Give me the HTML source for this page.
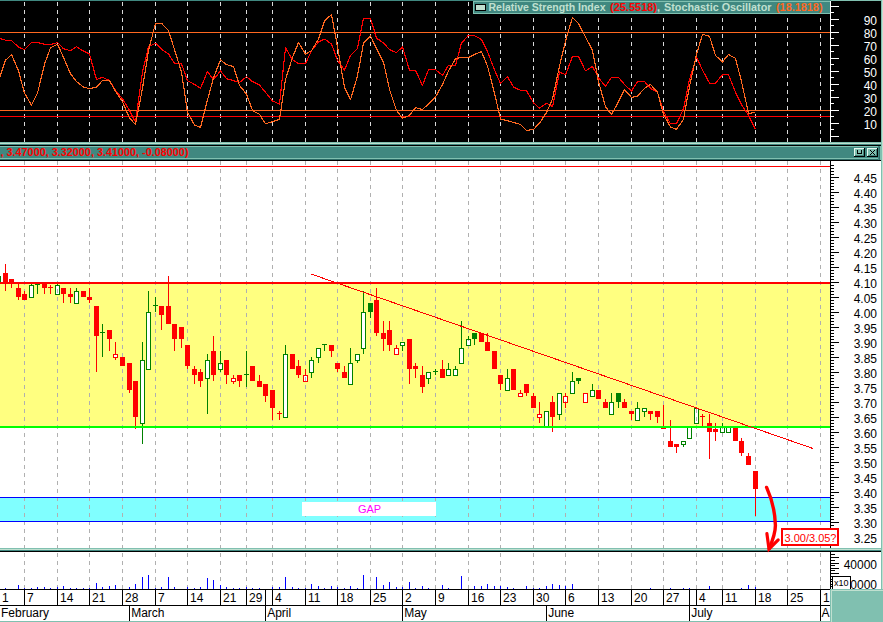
<!DOCTYPE html>
<html><head><meta charset="utf-8"><title>Chart</title>
<style>
html,body{margin:0;padding:0;background:#fff;}
svg{display:block;font-family:"Liberation Sans",sans-serif;}
</style></head>
<body>
<svg width="883" height="622" viewBox="0 0 883 622" shape-rendering="crispEdges">
<rect x="0" y="0" width="883" height="622" fill="#ffffff"/>
<rect x="0" y="0" width="883" height="1" fill="#408880"/>
<rect x="831" y="0" width="52" height="1" fill="#80c0b0"/>
<rect x="0" y="1" width="881" height="141" fill="#000000"/>
<rect x="881" y="0" width="1" height="622" fill="#80c0b0"/>
<rect x="882" y="0" width="1" height="622" fill="#c0e0d0"/>
<rect x="0" y="142" width="881" height="1" fill="#80c0b0"/>
<rect x="0" y="143" width="881" height="1" fill="#c0e0d0"/>
<rect x="0" y="144" width="881" height="1" fill="#408880"/>
<rect x="0" y="145" width="881" height="1" fill="#000"/>
<rect x="0" y="146" width="881" height="1" fill="#80c0b0"/>
<rect x="0" y="147" width="881" height="11" fill="#408880"/>
<rect x="0" y="158" width="881" height="1" fill="#80c0b0"/>
<rect x="0" y="159" width="881" height="1" fill="#2c6c66"/>
<rect x="0" y="160" width="881" height="1" fill="#000"/>
<rect x="878" y="146" width="3" height="14" fill="#408880"/>
<rect x="880" y="146" width="1" height="14" fill="#80c0b0"/>
<rect x="879" y="147" width="1" height="13" fill="#2c6c66"/>
<line x1="24.5" y1="2" x2="24.5" y2="142" stroke="#d8d8d8" stroke-width="1" stroke-dasharray="4 4"/>
<line x1="57.5" y1="2" x2="57.5" y2="142" stroke="#d8d8d8" stroke-width="1" stroke-dasharray="4 4"/>
<line x1="89.5" y1="2" x2="89.5" y2="142" stroke="#d8d8d8" stroke-width="1" stroke-dasharray="4 4"/>
<line x1="122.5" y1="2" x2="122.5" y2="142" stroke="#d8d8d8" stroke-width="1" stroke-dasharray="4 4"/>
<line x1="155.5" y1="2" x2="155.5" y2="142" stroke="#d8d8d8" stroke-width="1" stroke-dasharray="4 4"/>
<line x1="187.5" y1="2" x2="187.5" y2="142" stroke="#d8d8d8" stroke-width="1" stroke-dasharray="4 4"/>
<line x1="220.5" y1="2" x2="220.5" y2="142" stroke="#d8d8d8" stroke-width="1" stroke-dasharray="4 4"/>
<line x1="246.5" y1="2" x2="246.5" y2="142" stroke="#d8d8d8" stroke-width="1" stroke-dasharray="4 4"/>
<line x1="272.5" y1="2" x2="272.5" y2="142" stroke="#d8d8d8" stroke-width="1" stroke-dasharray="4 4"/>
<line x1="305.5" y1="2" x2="305.5" y2="142" stroke="#d8d8d8" stroke-width="1" stroke-dasharray="4 4"/>
<line x1="337.5" y1="2" x2="337.5" y2="142" stroke="#d8d8d8" stroke-width="1" stroke-dasharray="4 4"/>
<line x1="370.5" y1="2" x2="370.5" y2="142" stroke="#d8d8d8" stroke-width="1" stroke-dasharray="4 4"/>
<line x1="402.5" y1="2" x2="402.5" y2="142" stroke="#d8d8d8" stroke-width="1" stroke-dasharray="4 4"/>
<line x1="435.5" y1="2" x2="435.5" y2="142" stroke="#d8d8d8" stroke-width="1" stroke-dasharray="4 4"/>
<line x1="468.5" y1="2" x2="468.5" y2="142" stroke="#d8d8d8" stroke-width="1" stroke-dasharray="4 4"/>
<line x1="500.5" y1="2" x2="500.5" y2="142" stroke="#d8d8d8" stroke-width="1" stroke-dasharray="4 4"/>
<line x1="533.5" y1="2" x2="533.5" y2="142" stroke="#d8d8d8" stroke-width="1" stroke-dasharray="4 4"/>
<line x1="565.5" y1="2" x2="565.5" y2="142" stroke="#d8d8d8" stroke-width="1" stroke-dasharray="4 4"/>
<line x1="598.5" y1="2" x2="598.5" y2="142" stroke="#d8d8d8" stroke-width="1" stroke-dasharray="4 4"/>
<line x1="631.5" y1="2" x2="631.5" y2="142" stroke="#d8d8d8" stroke-width="1" stroke-dasharray="4 4"/>
<line x1="663.5" y1="2" x2="663.5" y2="142" stroke="#d8d8d8" stroke-width="1" stroke-dasharray="4 4"/>
<line x1="696.5" y1="2" x2="696.5" y2="142" stroke="#d8d8d8" stroke-width="1" stroke-dasharray="4 4"/>
<line x1="722.5" y1="2" x2="722.5" y2="142" stroke="#d8d8d8" stroke-width="1" stroke-dasharray="4 4"/>
<line x1="755.5" y1="2" x2="755.5" y2="142" stroke="#d8d8d8" stroke-width="1" stroke-dasharray="4 4"/>
<line x1="787.5" y1="2" x2="787.5" y2="142" stroke="#d8d8d8" stroke-width="1" stroke-dasharray="4 4"/>
<line x1="820.5" y1="2" x2="820.5" y2="142" stroke="#d8d8d8" stroke-width="1" stroke-dasharray="4 4"/>
<rect x="0" y="32" width="830" height="1" fill="#ff6820"/>
<rect x="0" y="110" width="830" height="1" fill="#ff6820"/>
<rect x="0" y="116" width="830" height="1" fill="#ff0000"/>
<polyline points="-1.5,38.1 5.5,40.1 11.5,40.4 18.5,47.2 24.5,49.7 31.5,42.6 37.5,42.6 44.5,44.3 50.5,44.5 57.5,42.6 63.5,48.7 70.5,50.7 76.5,46.8 83.5,51.1 89.5,54.0 96.5,79.6 102.5,77.3 109.5,80.6 115.5,90.3 122.5,98.9 129.5,110.5 135.5,122.1 142.5,71.9 148.5,46.8 155.5,43.3 161.5,49.3 168.5,54.0 174.5,63.2 181.5,63.8 187.5,80.6 194.5,84.5 200.5,88.3 207.5,71.5 213.5,79.6 220.5,70.9 226.5,78.7 233.5,80.6 239.5,82.5 246.5,76.7 252.5,81.6 259.5,85.0 265.5,92.2 272.5,100.9 279.5,104.2 285.5,47.8 292.5,59.8 298.5,63.6 305.5,63.6 311.5,50.7 318.5,42.0 324.5,39.1 331.5,43.9 337.5,60.3 344.5,70.0 350.5,55.5 357.5,48.4 363.5,18.2 370.5,18.2 376.5,38.1 383.5,43.0 389.5,49.7 396.5,52.6 402.5,46.8 409.5,70.4 415.5,70.4 422.5,85.4 428.5,69.6 435.5,69.6 442.5,75.4 448.5,65.2 455.5,65.2 461.5,43.0 468.5,35.2 474.5,35.6 481.5,39.5 487.5,51.6 494.5,70.0 500.5,83.5 507.5,76.7 513.5,87.0 520.5,90.3 526.5,90.6 533.5,102.8 539.5,108.2 546.5,103.2 552.5,106.7 559.5,71.9 565.5,74.8 572.5,56.5 578.5,56.5 585.5,70.9 592.5,66.5 598.5,77.7 605.5,86.4 611.5,77.3 618.5,77.3 624.5,84.5 631.5,91.2 637.5,81.6 644.5,81.6 650.5,88.3 657.5,92.2 663.5,111.5 670.5,123.7 676.5,123.7 683.5,108.6 689.5,79.6 696.5,57.4 702.5,70.0 709.5,83.1 715.5,83.1 722.5,74.8 728.5,74.8 735.5,92.2 741.5,104.7 748.5,115.4 755.5,129.4" fill="none" stroke="#ff0000" stroke-width="1.15" stroke-linejoin="round"/>
<polyline points="-1.5,80.6 5.5,60.3 11.5,54.5 18.5,70.9 24.5,93.2 31.5,105.1 37.5,93.2 44.5,64.2 50.5,47.8 57.5,44.3 63.5,57.4 70.5,73.8 76.5,81.6 83.5,87.0 89.5,88.7 96.5,87.0 102.5,80.6 109.5,80.6 115.5,91.2 122.5,101.8 129.5,118.2 135.5,124.4 142.5,88.3 148.5,50.7 155.5,23.3 161.5,23.3 168.5,30.4 174.5,49.7 181.5,71.9 187.5,112.5 194.5,125.0 200.5,127.5 207.5,99.9 213.5,77.7 220.5,59.9 226.5,64.6 233.5,66.5 239.5,85.4 246.5,94.1 252.5,110.5 259.5,114.4 265.5,123.7 272.5,121.7 279.5,119.2 285.5,79.6 292.5,57.4 298.5,42.6 305.5,54.0 311.5,50.7 318.5,39.1 324.5,20.8 331.5,14.6 337.5,46.8 344.5,87.4 350.5,99.9 357.5,75.8 363.5,43.0 370.5,35.8 376.5,48.7 383.5,62.3 389.5,89.3 396.5,110.5 402.5,118.2 409.5,115.4 415.5,107.6 422.5,109.6 428.5,103.8 435.5,97.0 442.5,84.5 448.5,70.9 455.5,58.8 461.5,57.4 468.5,57.4 474.5,54.5 481.5,51.6 487.5,66.1 494.5,93.2 500.5,119.2 507.5,120.6 513.5,122.5 520.5,124.4 526.5,130.4 533.5,129.4 539.5,123.1 546.5,112.5 552.5,98.9 559.5,66.1 565.5,41.0 572.5,17.3 578.5,23.7 585.5,36.8 592.5,50.7 598.5,81.6 605.5,106.7 611.5,114.4 618.5,101.8 624.5,89.7 631.5,97.4 637.5,96.0 644.5,88.3 650.5,84.5 657.5,92.2 663.5,114.4 670.5,126.9 676.5,129.4 683.5,119.2 689.5,86.4 696.5,54.5 702.5,34.3 709.5,36.2 715.5,55.5 722.5,61.9 728.5,54.5 735.5,58.4 741.5,81.6 748.5,113.4 755.5,112.5" fill="none" stroke="#ff6820" stroke-width="1.15" stroke-linejoin="round"/>
<rect x="830" y="1" width="1" height="141" fill="#ffffff"/>
<rect x="831" y="6" width="8" height="1" fill="#fff"/>
<rect x="831" y="12" width="3" height="1" fill="#fff"/>
<rect x="831" y="19" width="8" height="1" fill="#fff"/>
<rect x="831" y="25" width="3" height="1" fill="#fff"/>
<rect x="831" y="32" width="8" height="1" fill="#fff"/>
<rect x="831" y="38" width="3" height="1" fill="#fff"/>
<rect x="831" y="45" width="8" height="1" fill="#fff"/>
<rect x="831" y="51" width="3" height="1" fill="#fff"/>
<rect x="831" y="58" width="8" height="1" fill="#fff"/>
<rect x="831" y="64" width="3" height="1" fill="#fff"/>
<rect x="831" y="71" width="8" height="1" fill="#fff"/>
<rect x="831" y="77" width="3" height="1" fill="#fff"/>
<rect x="831" y="84" width="8" height="1" fill="#fff"/>
<rect x="831" y="90" width="3" height="1" fill="#fff"/>
<rect x="831" y="97" width="8" height="1" fill="#fff"/>
<rect x="831" y="103" width="3" height="1" fill="#fff"/>
<rect x="831" y="110" width="8" height="1" fill="#fff"/>
<rect x="831" y="116" width="3" height="1" fill="#fff"/>
<rect x="831" y="123" width="8" height="1" fill="#fff"/>
<rect x="831" y="129" width="3" height="1" fill="#fff"/>
<rect x="831" y="136" width="8" height="1" fill="#fff"/>
<text x="877" y="25" font-size="12" fill="#fff" text-anchor="end" font-weight="normal">90</text>
<text x="877" y="38" font-size="12" fill="#fff" text-anchor="end" font-weight="normal">80</text>
<text x="877" y="51" font-size="12" fill="#fff" text-anchor="end" font-weight="normal">70</text>
<text x="877" y="64" font-size="12" fill="#fff" text-anchor="end" font-weight="normal">60</text>
<text x="877" y="77" font-size="12" fill="#fff" text-anchor="end" font-weight="normal">50</text>
<text x="877" y="90" font-size="12" fill="#fff" text-anchor="end" font-weight="normal">40</text>
<text x="877" y="103" font-size="12" fill="#fff" text-anchor="end" font-weight="normal">30</text>
<text x="877" y="116" font-size="12" fill="#fff" text-anchor="end" font-weight="normal">20</text>
<text x="877" y="129" font-size="12" fill="#fff" text-anchor="end" font-weight="normal">10</text>
<rect x="473" y="1" width="358" height="13" fill="#408880"/>
<rect x="473" y="1" width="358" height="1" fill="#80c0b0"/>
<rect x="473" y="13" width="358" height="1" fill="#80c0b0"/>
<rect x="473" y="1" width="1" height="13" fill="#80c0b0"/>
<rect x="830" y="1" width="1" height="13" fill="#fff"/>
<rect x="475" y="4" width="11" height="7" fill="#000"/>
<rect x="476" y="5" width="9" height="5" fill="#c0e0d0"/>
<text x="488.5" y="10.5" font-size="10.5" font-weight="bold" fill="#c0e0d0" textLength="117" lengthAdjust="spacingAndGlyphs">Relative Strength Index</text>
<text x="610" y="10.5" font-size="10.5" font-weight="bold" fill="#ff0000" textLength="47" lengthAdjust="spacingAndGlyphs">(25.5518)</text>
<text x="657" y="10.5" font-size="10.5" font-weight="bold" fill="#c0e0d0" textLength="3" lengthAdjust="spacingAndGlyphs">,</text>
<text x="664" y="10.5" font-size="10.5" font-weight="bold" fill="#c0e0d0" textLength="107.5" lengthAdjust="spacingAndGlyphs">Stochastic Oscillator</text>
<text x="776" y="10.5" font-size="10.5" font-weight="bold" fill="#ff6820" textLength="46.5" lengthAdjust="spacingAndGlyphs">(18.1818)</text>
<text x="0.5" y="156" font-size="10.2" font-weight="bold" fill="#ff0000" textLength="188" lengthAdjust="spacingAndGlyphs">, 3.47000, 3.32000, 3.41000, -0.08000)</text>
<rect x="854" y="148" width="11" height="9" fill="#000"/>
<rect x="854" y="148" width="10" height="8" fill="#e8f8f0"/>
<rect x="855" y="149" width="9" height="7" fill="#408078"/>
<rect x="855" y="149" width="8" height="6" fill="#80c0b0"/>
<rect x="867" y="148" width="11" height="9" fill="#000"/>
<rect x="867" y="148" width="10" height="8" fill="#e8f8f0"/>
<rect x="868" y="149" width="9" height="7" fill="#408078"/>
<rect x="868" y="149" width="8" height="6" fill="#80c0b0"/>
<rect x="857" y="150" width="1" height="4" fill="#000"/>
<rect x="861" y="150" width="1" height="4" fill="#000"/>
<rect x="857" y="153" width="5" height="1" fill="#000"/>
<rect x="870" y="150" width="1" height="1" fill="#000"/>
<rect x="874" y="150" width="1" height="1" fill="#000"/>
<rect x="871" y="151" width="1" height="1" fill="#000"/>
<rect x="873" y="151" width="1" height="1" fill="#000"/>
<rect x="872" y="152" width="1" height="1" fill="#000"/>
<rect x="872" y="152" width="1" height="1" fill="#000"/>
<rect x="873" y="153" width="1" height="1" fill="#000"/>
<rect x="871" y="153" width="1" height="1" fill="#000"/>
<rect x="874" y="154" width="1" height="1" fill="#000"/>
<rect x="870" y="154" width="1" height="1" fill="#000"/>
<rect x="0" y="284" width="830" height="142" fill="#ffff80"/>
<rect x="0" y="498" width="830" height="23" fill="#80ffff"/>
<line x1="24.5" y1="161" x2="24.5" y2="548" stroke="#b0b0b0" stroke-width="1" stroke-dasharray="4 4"/>
<line x1="24.5" y1="553" x2="24.5" y2="589" stroke="#b0b0b0" stroke-width="1" stroke-dasharray="4 4"/>
<line x1="57.5" y1="161" x2="57.5" y2="548" stroke="#b0b0b0" stroke-width="1" stroke-dasharray="4 4"/>
<line x1="57.5" y1="553" x2="57.5" y2="589" stroke="#b0b0b0" stroke-width="1" stroke-dasharray="4 4"/>
<line x1="89.5" y1="161" x2="89.5" y2="548" stroke="#b0b0b0" stroke-width="1" stroke-dasharray="4 4"/>
<line x1="89.5" y1="553" x2="89.5" y2="589" stroke="#b0b0b0" stroke-width="1" stroke-dasharray="4 4"/>
<line x1="122.5" y1="161" x2="122.5" y2="548" stroke="#b0b0b0" stroke-width="1" stroke-dasharray="4 4"/>
<line x1="122.5" y1="553" x2="122.5" y2="589" stroke="#b0b0b0" stroke-width="1" stroke-dasharray="4 4"/>
<line x1="155.5" y1="161" x2="155.5" y2="548" stroke="#b0b0b0" stroke-width="1" stroke-dasharray="4 4"/>
<line x1="155.5" y1="553" x2="155.5" y2="589" stroke="#b0b0b0" stroke-width="1" stroke-dasharray="4 4"/>
<line x1="187.5" y1="161" x2="187.5" y2="548" stroke="#b0b0b0" stroke-width="1" stroke-dasharray="4 4"/>
<line x1="187.5" y1="553" x2="187.5" y2="589" stroke="#b0b0b0" stroke-width="1" stroke-dasharray="4 4"/>
<line x1="220.5" y1="161" x2="220.5" y2="548" stroke="#b0b0b0" stroke-width="1" stroke-dasharray="4 4"/>
<line x1="220.5" y1="553" x2="220.5" y2="589" stroke="#b0b0b0" stroke-width="1" stroke-dasharray="4 4"/>
<line x1="246.5" y1="161" x2="246.5" y2="548" stroke="#b0b0b0" stroke-width="1" stroke-dasharray="4 4"/>
<line x1="246.5" y1="553" x2="246.5" y2="589" stroke="#b0b0b0" stroke-width="1" stroke-dasharray="4 4"/>
<line x1="272.5" y1="161" x2="272.5" y2="548" stroke="#b0b0b0" stroke-width="1" stroke-dasharray="4 4"/>
<line x1="272.5" y1="553" x2="272.5" y2="589" stroke="#b0b0b0" stroke-width="1" stroke-dasharray="4 4"/>
<line x1="305.5" y1="161" x2="305.5" y2="548" stroke="#b0b0b0" stroke-width="1" stroke-dasharray="4 4"/>
<line x1="305.5" y1="553" x2="305.5" y2="589" stroke="#b0b0b0" stroke-width="1" stroke-dasharray="4 4"/>
<line x1="337.5" y1="161" x2="337.5" y2="548" stroke="#b0b0b0" stroke-width="1" stroke-dasharray="4 4"/>
<line x1="337.5" y1="553" x2="337.5" y2="589" stroke="#b0b0b0" stroke-width="1" stroke-dasharray="4 4"/>
<line x1="370.5" y1="161" x2="370.5" y2="548" stroke="#b0b0b0" stroke-width="1" stroke-dasharray="4 4"/>
<line x1="370.5" y1="553" x2="370.5" y2="589" stroke="#b0b0b0" stroke-width="1" stroke-dasharray="4 4"/>
<line x1="402.5" y1="161" x2="402.5" y2="548" stroke="#b0b0b0" stroke-width="1" stroke-dasharray="4 4"/>
<line x1="402.5" y1="553" x2="402.5" y2="589" stroke="#b0b0b0" stroke-width="1" stroke-dasharray="4 4"/>
<line x1="435.5" y1="161" x2="435.5" y2="548" stroke="#b0b0b0" stroke-width="1" stroke-dasharray="4 4"/>
<line x1="435.5" y1="553" x2="435.5" y2="589" stroke="#b0b0b0" stroke-width="1" stroke-dasharray="4 4"/>
<line x1="468.5" y1="161" x2="468.5" y2="548" stroke="#b0b0b0" stroke-width="1" stroke-dasharray="4 4"/>
<line x1="468.5" y1="553" x2="468.5" y2="589" stroke="#b0b0b0" stroke-width="1" stroke-dasharray="4 4"/>
<line x1="500.5" y1="161" x2="500.5" y2="548" stroke="#b0b0b0" stroke-width="1" stroke-dasharray="4 4"/>
<line x1="500.5" y1="553" x2="500.5" y2="589" stroke="#b0b0b0" stroke-width="1" stroke-dasharray="4 4"/>
<line x1="533.5" y1="161" x2="533.5" y2="548" stroke="#b0b0b0" stroke-width="1" stroke-dasharray="4 4"/>
<line x1="533.5" y1="553" x2="533.5" y2="589" stroke="#b0b0b0" stroke-width="1" stroke-dasharray="4 4"/>
<line x1="565.5" y1="161" x2="565.5" y2="548" stroke="#b0b0b0" stroke-width="1" stroke-dasharray="4 4"/>
<line x1="565.5" y1="553" x2="565.5" y2="589" stroke="#b0b0b0" stroke-width="1" stroke-dasharray="4 4"/>
<line x1="598.5" y1="161" x2="598.5" y2="548" stroke="#b0b0b0" stroke-width="1" stroke-dasharray="4 4"/>
<line x1="598.5" y1="553" x2="598.5" y2="589" stroke="#b0b0b0" stroke-width="1" stroke-dasharray="4 4"/>
<line x1="631.5" y1="161" x2="631.5" y2="548" stroke="#b0b0b0" stroke-width="1" stroke-dasharray="4 4"/>
<line x1="631.5" y1="553" x2="631.5" y2="589" stroke="#b0b0b0" stroke-width="1" stroke-dasharray="4 4"/>
<line x1="663.5" y1="161" x2="663.5" y2="548" stroke="#b0b0b0" stroke-width="1" stroke-dasharray="4 4"/>
<line x1="663.5" y1="553" x2="663.5" y2="589" stroke="#b0b0b0" stroke-width="1" stroke-dasharray="4 4"/>
<line x1="696.5" y1="161" x2="696.5" y2="548" stroke="#b0b0b0" stroke-width="1" stroke-dasharray="4 4"/>
<line x1="696.5" y1="553" x2="696.5" y2="589" stroke="#b0b0b0" stroke-width="1" stroke-dasharray="4 4"/>
<line x1="722.5" y1="161" x2="722.5" y2="548" stroke="#b0b0b0" stroke-width="1" stroke-dasharray="4 4"/>
<line x1="722.5" y1="553" x2="722.5" y2="589" stroke="#b0b0b0" stroke-width="1" stroke-dasharray="4 4"/>
<line x1="755.5" y1="161" x2="755.5" y2="548" stroke="#b0b0b0" stroke-width="1" stroke-dasharray="4 4"/>
<line x1="755.5" y1="553" x2="755.5" y2="589" stroke="#b0b0b0" stroke-width="1" stroke-dasharray="4 4"/>
<line x1="787.5" y1="161" x2="787.5" y2="548" stroke="#b0b0b0" stroke-width="1" stroke-dasharray="4 4"/>
<line x1="787.5" y1="553" x2="787.5" y2="589" stroke="#b0b0b0" stroke-width="1" stroke-dasharray="4 4"/>
<line x1="820.5" y1="161" x2="820.5" y2="548" stroke="#b0b0b0" stroke-width="1" stroke-dasharray="4 4"/>
<line x1="820.5" y1="553" x2="820.5" y2="589" stroke="#b0b0b0" stroke-width="1" stroke-dasharray="4 4"/>
<rect x="0" y="166" width="830" height="1" fill="#ff0000"/>
<rect x="0" y="497" width="830" height="1" fill="#0000ff"/>
<rect x="0" y="521" width="830" height="1" fill="#0000ff"/>
<rect x="302" y="502" width="134" height="14" fill="#fff"/>
<text x="369.5" y="513" font-size="11" fill="#ff00ff" text-anchor="middle" font-weight="normal">GAP</text>
<rect x="-2" y="276" width="1" height="6" fill="#008000"/>
<rect x="-4" y="276" width="5" height="7" fill="#008000"/>
<rect x="-3" y="277" width="3" height="5" fill="#fff"/>
<rect x="5" y="264" width="1" height="27" fill="#ff0000"/>
<rect x="3" y="273" width="5" height="9" fill="#ff0000"/>
<rect x="11" y="279" width="1" height="9" fill="#ff0000"/>
<rect x="9" y="279" width="5" height="3" fill="#ff0000"/>
<rect x="18" y="284" width="1" height="16" fill="#ff0000"/>
<rect x="16" y="288" width="5" height="9" fill="#ff0000"/>
<rect x="24" y="291" width="1" height="9" fill="#ff0000"/>
<rect x="22" y="294" width="5" height="6" fill="#ff0000"/>
<rect x="31" y="284" width="1" height="13" fill="#008000"/>
<rect x="29" y="285" width="5" height="13" fill="#008000"/>
<rect x="30" y="286" width="3" height="11" fill="#fff"/>
<rect x="37" y="285" width="1" height="9" fill="#008000"/>
<rect x="37" y="284" width="1" height="1" fill="#008000"/>
<rect x="35" y="284" width="5" height="1" fill="#008000"/>
<rect x="44" y="284" width="1" height="10" fill="#ff0000"/>
<rect x="42" y="284" width="5" height="4" fill="#ff0000"/>
<rect x="50" y="285" width="1" height="9" fill="#ff0000"/>
<rect x="48" y="287" width="5" height="1" fill="#ff0000"/>
<rect x="57" y="284" width="1" height="10" fill="#008000"/>
<rect x="55" y="285" width="5" height="10" fill="#008000"/>
<rect x="56" y="286" width="3" height="8" fill="#fff"/>
<rect x="57" y="289" width="1" height="1" fill="#b0b0b0"/>
<rect x="57" y="290" width="1" height="1" fill="#b0b0b0"/>
<rect x="57" y="291" width="1" height="1" fill="#b0b0b0"/>
<rect x="57" y="292" width="1" height="1" fill="#b0b0b0"/>
<rect x="63" y="288" width="1" height="15" fill="#ff0000"/>
<rect x="61" y="288" width="5" height="6" fill="#ff0000"/>
<rect x="70" y="288" width="1" height="15" fill="#ff0000"/>
<rect x="68" y="294" width="5" height="3" fill="#ff0000"/>
<rect x="76" y="288" width="1" height="15" fill="#008000"/>
<rect x="74" y="291" width="5" height="13" fill="#008000"/>
<rect x="75" y="292" width="3" height="11" fill="#fff"/>
<rect x="83" y="291" width="1" height="6" fill="#ff0000"/>
<rect x="81" y="291" width="5" height="6" fill="#ff0000"/>
<rect x="89" y="288" width="1" height="15" fill="#ff0000"/>
<rect x="87" y="297" width="5" height="3" fill="#ff0000"/>
<rect x="96" y="306" width="1" height="66" fill="#ff0000"/>
<rect x="94" y="306" width="5" height="30" fill="#ff0000"/>
<rect x="102" y="324" width="1" height="33" fill="#008000"/>
<rect x="100" y="332" width="5" height="1" fill="#008000"/>
<rect x="109" y="330" width="1" height="21" fill="#ff0000"/>
<rect x="107" y="330" width="5" height="9" fill="#ff0000"/>
<rect x="115" y="342" width="1" height="18" fill="#ff0000"/>
<rect x="113" y="354" width="5" height="4" fill="#ff0000"/>
<rect x="114" y="355" width="3" height="2" fill="#fff"/>
<rect x="122" y="357" width="1" height="9" fill="#ff0000"/>
<rect x="120" y="357" width="5" height="9" fill="#ff0000"/>
<rect x="129" y="363" width="1" height="30" fill="#ff0000"/>
<rect x="127" y="363" width="5" height="27" fill="#ff0000"/>
<rect x="135" y="381" width="1" height="48" fill="#ff0000"/>
<rect x="133" y="381" width="5" height="36" fill="#ff0000"/>
<rect x="142" y="342" width="1" height="102" fill="#008000"/>
<rect x="140" y="360" width="5" height="64" fill="#008000"/>
<rect x="141" y="361" width="3" height="62" fill="#fff"/>
<rect x="148" y="291" width="1" height="78" fill="#008000"/>
<rect x="146" y="312" width="5" height="58" fill="#008000"/>
<rect x="147" y="313" width="3" height="56" fill="#fff"/>
<rect x="155" y="297" width="1" height="15" fill="#008000"/>
<rect x="153" y="305" width="5" height="1" fill="#008000"/>
<rect x="161" y="306" width="1" height="24" fill="#ff0000"/>
<rect x="159" y="306" width="5" height="9" fill="#ff0000"/>
<rect x="168" y="276" width="1" height="48" fill="#ff0000"/>
<rect x="166" y="306" width="5" height="18" fill="#ff0000"/>
<rect x="174" y="324" width="1" height="27" fill="#ff0000"/>
<rect x="172" y="324" width="5" height="15" fill="#ff0000"/>
<rect x="181" y="327" width="1" height="21" fill="#ff0000"/>
<rect x="179" y="327" width="5" height="12" fill="#ff0000"/>
<rect x="187" y="345" width="1" height="24" fill="#ff0000"/>
<rect x="185" y="345" width="5" height="21" fill="#ff0000"/>
<rect x="194" y="366" width="1" height="18" fill="#ff0000"/>
<rect x="192" y="369" width="5" height="6" fill="#ff0000"/>
<rect x="200" y="369" width="1" height="18" fill="#ff0000"/>
<rect x="198" y="372" width="5" height="9" fill="#ff0000"/>
<rect x="207" y="354" width="1" height="60" fill="#008000"/>
<rect x="205" y="360" width="5" height="19" fill="#008000"/>
<rect x="206" y="361" width="3" height="17" fill="#fff"/>
<rect x="213" y="336" width="1" height="45" fill="#ff0000"/>
<rect x="211" y="351" width="5" height="24" fill="#ff0000"/>
<rect x="220" y="351" width="1" height="21" fill="#008000"/>
<rect x="218" y="363" width="5" height="7" fill="#008000"/>
<rect x="219" y="364" width="3" height="5" fill="#fff"/>
<rect x="220" y="364" width="1" height="1" fill="#b0b0b0"/>
<rect x="226" y="360" width="1" height="24" fill="#ff0000"/>
<rect x="224" y="360" width="5" height="15" fill="#ff0000"/>
<rect x="233" y="375" width="1" height="9" fill="#ff0000"/>
<rect x="231" y="378" width="5" height="4" fill="#ff0000"/>
<rect x="232" y="379" width="3" height="2" fill="#fff"/>
<rect x="239" y="375" width="1" height="12" fill="#ff0000"/>
<rect x="237" y="375" width="5" height="6" fill="#ff0000"/>
<rect x="246" y="351" width="1" height="36" fill="#008000"/>
<rect x="244" y="374" width="5" height="1" fill="#008000"/>
<rect x="252" y="366" width="1" height="15" fill="#ff0000"/>
<rect x="250" y="366" width="5" height="15" fill="#ff0000"/>
<rect x="259" y="375" width="1" height="12" fill="#ff0000"/>
<rect x="257" y="381" width="5" height="6" fill="#ff0000"/>
<rect x="265" y="384" width="1" height="18" fill="#ff0000"/>
<rect x="263" y="384" width="5" height="12" fill="#ff0000"/>
<rect x="272" y="390" width="1" height="30" fill="#ff0000"/>
<rect x="270" y="390" width="5" height="18" fill="#ff0000"/>
<rect x="279" y="411" width="1" height="9" fill="#ff0000"/>
<rect x="277" y="413" width="5" height="1" fill="#ff0000"/>
<rect x="285" y="345" width="1" height="72" fill="#008000"/>
<rect x="283" y="354" width="5" height="64" fill="#008000"/>
<rect x="284" y="355" width="3" height="62" fill="#fff"/>
<rect x="292" y="354" width="1" height="15" fill="#ff0000"/>
<rect x="290" y="354" width="5" height="15" fill="#ff0000"/>
<rect x="298" y="360" width="1" height="18" fill="#ff0000"/>
<rect x="296" y="366" width="5" height="9" fill="#ff0000"/>
<rect x="305" y="369" width="1" height="12" fill="#ff0000"/>
<rect x="303" y="375" width="5" height="7" fill="#ff0000"/>
<rect x="304" y="376" width="3" height="5" fill="#fff"/>
<rect x="305" y="377" width="1" height="1" fill="#b0b0b0"/>
<rect x="305" y="378" width="1" height="1" fill="#b0b0b0"/>
<rect x="305" y="379" width="1" height="1" fill="#b0b0b0"/>
<rect x="305" y="380" width="1" height="1" fill="#b0b0b0"/>
<rect x="311" y="357" width="1" height="21" fill="#008000"/>
<rect x="309" y="360" width="5" height="13" fill="#008000"/>
<rect x="310" y="361" width="3" height="11" fill="#fff"/>
<rect x="318" y="348" width="1" height="15" fill="#008000"/>
<rect x="316" y="348" width="5" height="10" fill="#008000"/>
<rect x="317" y="349" width="3" height="8" fill="#fff"/>
<rect x="324" y="345" width="1" height="6" fill="#008000"/>
<rect x="324" y="344" width="1" height="1" fill="#008000"/>
<rect x="322" y="344" width="5" height="1" fill="#008000"/>
<rect x="331" y="345" width="1" height="12" fill="#ff0000"/>
<rect x="329" y="345" width="5" height="6" fill="#ff0000"/>
<rect x="337" y="363" width="1" height="9" fill="#ff0000"/>
<rect x="335" y="363" width="5" height="6" fill="#ff0000"/>
<rect x="344" y="366" width="1" height="12" fill="#ff0000"/>
<rect x="342" y="372" width="5" height="6" fill="#ff0000"/>
<rect x="350" y="348" width="1" height="36" fill="#008000"/>
<rect x="348" y="363" width="5" height="22" fill="#008000"/>
<rect x="349" y="364" width="3" height="20" fill="#fff"/>
<rect x="357" y="354" width="1" height="9" fill="#008000"/>
<rect x="355" y="354" width="5" height="7" fill="#008000"/>
<rect x="356" y="355" width="3" height="5" fill="#fff"/>
<rect x="363" y="291" width="1" height="63" fill="#008000"/>
<rect x="361" y="312" width="5" height="37" fill="#008000"/>
<rect x="362" y="313" width="3" height="35" fill="#fff"/>
<rect x="370" y="303" width="1" height="15" fill="#008000"/>
<rect x="368" y="303" width="5" height="9" fill="#008000"/>
<rect x="376" y="288" width="1" height="48" fill="#ff0000"/>
<rect x="374" y="300" width="5" height="33" fill="#ff0000"/>
<rect x="383" y="321" width="1" height="30" fill="#ff0000"/>
<rect x="381" y="333" width="5" height="6" fill="#ff0000"/>
<rect x="389" y="321" width="1" height="30" fill="#ff0000"/>
<rect x="387" y="330" width="5" height="15" fill="#ff0000"/>
<rect x="396" y="345" width="1" height="9" fill="#ff0000"/>
<rect x="394" y="348" width="5" height="7" fill="#ff0000"/>
<rect x="395" y="349" width="3" height="5" fill="#fff"/>
<rect x="402" y="342" width="1" height="9" fill="#008000"/>
<rect x="400" y="342" width="5" height="4" fill="#008000"/>
<rect x="401" y="343" width="3" height="2" fill="#fff"/>
<rect x="409" y="339" width="1" height="45" fill="#ff0000"/>
<rect x="407" y="339" width="5" height="30" fill="#ff0000"/>
<rect x="415" y="363" width="1" height="15" fill="#ff0000"/>
<rect x="413" y="366" width="5" height="3" fill="#ff0000"/>
<rect x="422" y="366" width="1" height="27" fill="#ff0000"/>
<rect x="420" y="375" width="5" height="12" fill="#ff0000"/>
<rect x="428" y="372" width="1" height="12" fill="#008000"/>
<rect x="426" y="372" width="5" height="7" fill="#008000"/>
<rect x="427" y="373" width="3" height="5" fill="#fff"/>
<rect x="435" y="369" width="1" height="6" fill="#008000"/>
<rect x="433" y="371" width="5" height="1" fill="#008000"/>
<rect x="442" y="360" width="1" height="18" fill="#ff0000"/>
<rect x="440" y="369" width="5" height="9" fill="#ff0000"/>
<rect x="448" y="363" width="1" height="12" fill="#008000"/>
<rect x="446" y="369" width="5" height="7" fill="#008000"/>
<rect x="447" y="370" width="3" height="5" fill="#fff"/>
<rect x="455" y="366" width="1" height="9" fill="#008000"/>
<rect x="453" y="369" width="5" height="7" fill="#008000"/>
<rect x="454" y="370" width="3" height="5" fill="#fff"/>
<rect x="461" y="321" width="1" height="42" fill="#008000"/>
<rect x="459" y="348" width="5" height="16" fill="#008000"/>
<rect x="460" y="349" width="3" height="14" fill="#fff"/>
<rect x="468" y="336" width="1" height="9" fill="#008000"/>
<rect x="466" y="339" width="5" height="7" fill="#008000"/>
<rect x="467" y="340" width="3" height="5" fill="#fff"/>
<rect x="468" y="340" width="1" height="1" fill="#b0b0b0"/>
<rect x="474" y="333" width="1" height="12" fill="#008000"/>
<rect x="472" y="333" width="5" height="6" fill="#008000"/>
<rect x="481" y="333" width="1" height="9" fill="#ff0000"/>
<rect x="479" y="333" width="5" height="9" fill="#ff0000"/>
<rect x="487" y="333" width="1" height="18" fill="#ff0000"/>
<rect x="485" y="342" width="5" height="9" fill="#ff0000"/>
<rect x="494" y="351" width="1" height="18" fill="#ff0000"/>
<rect x="492" y="351" width="5" height="18" fill="#ff0000"/>
<rect x="500" y="375" width="1" height="15" fill="#ff0000"/>
<rect x="498" y="375" width="5" height="9" fill="#ff0000"/>
<rect x="507" y="369" width="1" height="21" fill="#008000"/>
<rect x="505" y="378" width="5" height="13" fill="#008000"/>
<rect x="506" y="379" width="3" height="11" fill="#fff"/>
<rect x="513" y="369" width="1" height="21" fill="#ff0000"/>
<rect x="511" y="369" width="5" height="21" fill="#ff0000"/>
<rect x="520" y="390" width="1" height="6" fill="#ff0000"/>
<rect x="518" y="393" width="5" height="4" fill="#ff0000"/>
<rect x="519" y="394" width="3" height="2" fill="#fff"/>
<rect x="526" y="384" width="1" height="12" fill="#ff0000"/>
<rect x="524" y="384" width="5" height="9" fill="#ff0000"/>
<rect x="533" y="393" width="1" height="15" fill="#ff0000"/>
<rect x="531" y="396" width="5" height="12" fill="#ff0000"/>
<rect x="539" y="402" width="1" height="21" fill="#ff0000"/>
<rect x="537" y="414" width="5" height="4" fill="#ff0000"/>
<rect x="538" y="415" width="3" height="2" fill="#fff"/>
<rect x="546" y="411" width="1" height="15" fill="#008000"/>
<rect x="544" y="411" width="5" height="16" fill="#008000"/>
<rect x="545" y="412" width="3" height="14" fill="#fff"/>
<rect x="552" y="396" width="1" height="36" fill="#ff0000"/>
<rect x="550" y="402" width="5" height="15" fill="#ff0000"/>
<rect x="559" y="393" width="1" height="27" fill="#008000"/>
<rect x="557" y="393" width="5" height="22" fill="#008000"/>
<rect x="558" y="394" width="3" height="20" fill="#fff"/>
<rect x="565" y="393" width="1" height="15" fill="#ff0000"/>
<rect x="563" y="396" width="5" height="7" fill="#ff0000"/>
<rect x="564" y="397" width="3" height="5" fill="#fff"/>
<rect x="565" y="401" width="1" height="1" fill="#b0b0b0"/>
<rect x="572" y="372" width="1" height="21" fill="#008000"/>
<rect x="570" y="381" width="5" height="13" fill="#008000"/>
<rect x="571" y="382" width="3" height="11" fill="#fff"/>
<rect x="578" y="378" width="1" height="6" fill="#008000"/>
<rect x="576" y="378" width="5" height="3" fill="#008000"/>
<rect x="585" y="393" width="1" height="9" fill="#ff0000"/>
<rect x="583" y="393" width="5" height="10" fill="#ff0000"/>
<rect x="584" y="394" width="3" height="8" fill="#fff"/>
<rect x="592" y="384" width="1" height="12" fill="#008000"/>
<rect x="590" y="390" width="5" height="7" fill="#008000"/>
<rect x="591" y="391" width="3" height="5" fill="#fff"/>
<rect x="598" y="390" width="1" height="9" fill="#ff0000"/>
<rect x="596" y="390" width="5" height="9" fill="#ff0000"/>
<rect x="605" y="399" width="1" height="9" fill="#ff0000"/>
<rect x="603" y="402" width="5" height="6" fill="#ff0000"/>
<rect x="611" y="393" width="1" height="21" fill="#008000"/>
<rect x="609" y="402" width="5" height="13" fill="#008000"/>
<rect x="610" y="403" width="3" height="11" fill="#fff"/>
<rect x="618" y="393" width="1" height="15" fill="#008000"/>
<rect x="616" y="393" width="5" height="9" fill="#008000"/>
<rect x="624" y="399" width="1" height="9" fill="#ff0000"/>
<rect x="622" y="402" width="5" height="6" fill="#ff0000"/>
<rect x="631" y="411" width="1" height="9" fill="#ff0000"/>
<rect x="629" y="411" width="5" height="3" fill="#ff0000"/>
<rect x="637" y="402" width="1" height="18" fill="#008000"/>
<rect x="635" y="408" width="5" height="13" fill="#008000"/>
<rect x="636" y="409" width="3" height="11" fill="#fff"/>
<rect x="644" y="408" width="1" height="9" fill="#008000"/>
<rect x="642" y="408" width="5" height="4" fill="#008000"/>
<rect x="643" y="409" width="3" height="2" fill="#fff"/>
<rect x="650" y="411" width="1" height="9" fill="#ff0000"/>
<rect x="648" y="411" width="5" height="3" fill="#ff0000"/>
<rect x="657" y="411" width="1" height="12" fill="#ff0000"/>
<rect x="655" y="411" width="5" height="6" fill="#ff0000"/>
<rect x="663" y="405" width="1" height="24" fill="#ff0000"/>
<rect x="661" y="428" width="5" height="1" fill="#ff0000"/>
<rect x="670" y="420" width="1" height="27" fill="#ff0000"/>
<rect x="668" y="441" width="5" height="6" fill="#ff0000"/>
<rect x="676" y="444" width="1" height="9" fill="#ff0000"/>
<rect x="674" y="444" width="5" height="3" fill="#ff0000"/>
<rect x="683" y="441" width="1" height="6" fill="#008000"/>
<rect x="681" y="441" width="5" height="4" fill="#008000"/>
<rect x="682" y="442" width="3" height="2" fill="#fff"/>
<rect x="689" y="426" width="1" height="12" fill="#008000"/>
<rect x="687" y="426" width="5" height="13" fill="#008000"/>
<rect x="688" y="427" width="3" height="11" fill="#fff"/>
<rect x="696" y="408" width="1" height="15" fill="#008000"/>
<rect x="694" y="408" width="5" height="16" fill="#008000"/>
<rect x="695" y="409" width="3" height="14" fill="#fff"/>
<rect x="696" y="409" width="1" height="1" fill="#b0b0b0"/>
<rect x="696" y="410" width="1" height="1" fill="#b0b0b0"/>
<rect x="696" y="411" width="1" height="1" fill="#b0b0b0"/>
<rect x="696" y="412" width="1" height="1" fill="#b0b0b0"/>
<rect x="696" y="417" width="1" height="1" fill="#b0b0b0"/>
<rect x="696" y="418" width="1" height="1" fill="#b0b0b0"/>
<rect x="696" y="419" width="1" height="1" fill="#b0b0b0"/>
<rect x="696" y="420" width="1" height="1" fill="#b0b0b0"/>
<rect x="702" y="414" width="1" height="12" fill="#ff0000"/>
<rect x="700" y="416" width="5" height="1" fill="#ff0000"/>
<rect x="709" y="414" width="1" height="45" fill="#ff0000"/>
<rect x="707" y="423" width="5" height="9" fill="#ff0000"/>
<rect x="715" y="423" width="1" height="18" fill="#ff0000"/>
<rect x="713" y="429" width="5" height="3" fill="#ff0000"/>
<rect x="722" y="423" width="1" height="9" fill="#008000"/>
<rect x="720" y="426" width="5" height="7" fill="#008000"/>
<rect x="721" y="427" width="3" height="5" fill="#fff"/>
<rect x="722" y="427" width="1" height="1" fill="#b0b0b0"/>
<rect x="722" y="428" width="1" height="1" fill="#b0b0b0"/>
<rect x="728" y="426" width="1" height="6" fill="#008000"/>
<rect x="726" y="426" width="5" height="7" fill="#008000"/>
<rect x="727" y="427" width="3" height="5" fill="#fff"/>
<rect x="735" y="426" width="1" height="15" fill="#ff0000"/>
<rect x="733" y="426" width="5" height="15" fill="#ff0000"/>
<rect x="741" y="438" width="1" height="18" fill="#ff0000"/>
<rect x="739" y="441" width="5" height="12" fill="#ff0000"/>
<rect x="748" y="453" width="1" height="12" fill="#ff0000"/>
<rect x="746" y="456" width="5" height="9" fill="#ff0000"/>
<rect x="755" y="471" width="1" height="45" fill="#ff0000"/>
<rect x="753" y="471" width="5" height="18" fill="#ff0000"/>
<rect x="0" y="282" width="830" height="2" fill="#ff0000"/>
<rect x="0" y="426" width="830" height="2" fill="#00ff00"/>
<line x1="311" y1="274" x2="813" y2="448.5" stroke="#ff0000" stroke-width="1"/>
<rect x="830" y="161" width="1" height="387" fill="#000"/>
<rect x="831" y="165" width="3" height="1" fill="#000"/>
<rect x="831" y="168" width="3" height="1" fill="#000"/>
<rect x="831" y="171" width="3" height="1" fill="#000"/>
<rect x="831" y="174" width="3" height="1" fill="#000"/>
<rect x="831" y="177" width="8" height="1" fill="#000"/>
<rect x="831" y="180" width="3" height="1" fill="#000"/>
<rect x="831" y="183" width="3" height="1" fill="#000"/>
<rect x="831" y="186" width="3" height="1" fill="#000"/>
<rect x="831" y="189" width="3" height="1" fill="#000"/>
<rect x="831" y="192" width="8" height="1" fill="#000"/>
<rect x="831" y="195" width="3" height="1" fill="#000"/>
<rect x="831" y="198" width="3" height="1" fill="#000"/>
<rect x="831" y="201" width="3" height="1" fill="#000"/>
<rect x="831" y="204" width="3" height="1" fill="#000"/>
<rect x="831" y="207" width="8" height="1" fill="#000"/>
<rect x="831" y="210" width="3" height="1" fill="#000"/>
<rect x="831" y="213" width="3" height="1" fill="#000"/>
<rect x="831" y="216" width="3" height="1" fill="#000"/>
<rect x="831" y="219" width="3" height="1" fill="#000"/>
<rect x="831" y="222" width="8" height="1" fill="#000"/>
<rect x="831" y="225" width="3" height="1" fill="#000"/>
<rect x="831" y="228" width="3" height="1" fill="#000"/>
<rect x="831" y="231" width="3" height="1" fill="#000"/>
<rect x="831" y="234" width="3" height="1" fill="#000"/>
<rect x="831" y="237" width="8" height="1" fill="#000"/>
<rect x="831" y="240" width="3" height="1" fill="#000"/>
<rect x="831" y="243" width="3" height="1" fill="#000"/>
<rect x="831" y="246" width="3" height="1" fill="#000"/>
<rect x="831" y="249" width="3" height="1" fill="#000"/>
<rect x="831" y="252" width="8" height="1" fill="#000"/>
<rect x="831" y="255" width="3" height="1" fill="#000"/>
<rect x="831" y="258" width="3" height="1" fill="#000"/>
<rect x="831" y="261" width="3" height="1" fill="#000"/>
<rect x="831" y="264" width="3" height="1" fill="#000"/>
<rect x="831" y="267" width="8" height="1" fill="#000"/>
<rect x="831" y="270" width="3" height="1" fill="#000"/>
<rect x="831" y="273" width="3" height="1" fill="#000"/>
<rect x="831" y="276" width="3" height="1" fill="#000"/>
<rect x="831" y="279" width="3" height="1" fill="#000"/>
<rect x="831" y="282" width="8" height="1" fill="#000"/>
<rect x="831" y="285" width="3" height="1" fill="#000"/>
<rect x="831" y="288" width="3" height="1" fill="#000"/>
<rect x="831" y="291" width="3" height="1" fill="#000"/>
<rect x="831" y="294" width="3" height="1" fill="#000"/>
<rect x="831" y="297" width="8" height="1" fill="#000"/>
<rect x="831" y="300" width="3" height="1" fill="#000"/>
<rect x="831" y="303" width="3" height="1" fill="#000"/>
<rect x="831" y="306" width="3" height="1" fill="#000"/>
<rect x="831" y="309" width="3" height="1" fill="#000"/>
<rect x="831" y="312" width="8" height="1" fill="#000"/>
<rect x="831" y="315" width="3" height="1" fill="#000"/>
<rect x="831" y="318" width="3" height="1" fill="#000"/>
<rect x="831" y="321" width="3" height="1" fill="#000"/>
<rect x="831" y="324" width="3" height="1" fill="#000"/>
<rect x="831" y="327" width="8" height="1" fill="#000"/>
<rect x="831" y="330" width="3" height="1" fill="#000"/>
<rect x="831" y="333" width="3" height="1" fill="#000"/>
<rect x="831" y="336" width="3" height="1" fill="#000"/>
<rect x="831" y="339" width="3" height="1" fill="#000"/>
<rect x="831" y="342" width="8" height="1" fill="#000"/>
<rect x="831" y="345" width="3" height="1" fill="#000"/>
<rect x="831" y="348" width="3" height="1" fill="#000"/>
<rect x="831" y="351" width="3" height="1" fill="#000"/>
<rect x="831" y="354" width="3" height="1" fill="#000"/>
<rect x="831" y="357" width="8" height="1" fill="#000"/>
<rect x="831" y="360" width="3" height="1" fill="#000"/>
<rect x="831" y="363" width="3" height="1" fill="#000"/>
<rect x="831" y="366" width="3" height="1" fill="#000"/>
<rect x="831" y="369" width="3" height="1" fill="#000"/>
<rect x="831" y="372" width="8" height="1" fill="#000"/>
<rect x="831" y="375" width="3" height="1" fill="#000"/>
<rect x="831" y="378" width="3" height="1" fill="#000"/>
<rect x="831" y="381" width="3" height="1" fill="#000"/>
<rect x="831" y="384" width="3" height="1" fill="#000"/>
<rect x="831" y="387" width="8" height="1" fill="#000"/>
<rect x="831" y="390" width="3" height="1" fill="#000"/>
<rect x="831" y="393" width="3" height="1" fill="#000"/>
<rect x="831" y="396" width="3" height="1" fill="#000"/>
<rect x="831" y="399" width="3" height="1" fill="#000"/>
<rect x="831" y="402" width="8" height="1" fill="#000"/>
<rect x="831" y="405" width="3" height="1" fill="#000"/>
<rect x="831" y="408" width="3" height="1" fill="#000"/>
<rect x="831" y="411" width="3" height="1" fill="#000"/>
<rect x="831" y="414" width="3" height="1" fill="#000"/>
<rect x="831" y="417" width="8" height="1" fill="#000"/>
<rect x="831" y="420" width="3" height="1" fill="#000"/>
<rect x="831" y="423" width="3" height="1" fill="#000"/>
<rect x="831" y="426" width="3" height="1" fill="#000"/>
<rect x="831" y="429" width="3" height="1" fill="#000"/>
<rect x="831" y="432" width="8" height="1" fill="#000"/>
<rect x="831" y="435" width="3" height="1" fill="#000"/>
<rect x="831" y="438" width="3" height="1" fill="#000"/>
<rect x="831" y="441" width="3" height="1" fill="#000"/>
<rect x="831" y="444" width="3" height="1" fill="#000"/>
<rect x="831" y="447" width="8" height="1" fill="#000"/>
<rect x="831" y="450" width="3" height="1" fill="#000"/>
<rect x="831" y="453" width="3" height="1" fill="#000"/>
<rect x="831" y="456" width="3" height="1" fill="#000"/>
<rect x="831" y="459" width="3" height="1" fill="#000"/>
<rect x="831" y="462" width="8" height="1" fill="#000"/>
<rect x="831" y="465" width="3" height="1" fill="#000"/>
<rect x="831" y="468" width="3" height="1" fill="#000"/>
<rect x="831" y="471" width="3" height="1" fill="#000"/>
<rect x="831" y="474" width="3" height="1" fill="#000"/>
<rect x="831" y="477" width="8" height="1" fill="#000"/>
<rect x="831" y="480" width="3" height="1" fill="#000"/>
<rect x="831" y="483" width="3" height="1" fill="#000"/>
<rect x="831" y="486" width="3" height="1" fill="#000"/>
<rect x="831" y="489" width="3" height="1" fill="#000"/>
<rect x="831" y="492" width="8" height="1" fill="#000"/>
<rect x="831" y="495" width="3" height="1" fill="#000"/>
<rect x="831" y="498" width="3" height="1" fill="#000"/>
<rect x="831" y="501" width="3" height="1" fill="#000"/>
<rect x="831" y="504" width="3" height="1" fill="#000"/>
<rect x="831" y="507" width="8" height="1" fill="#000"/>
<rect x="831" y="510" width="3" height="1" fill="#000"/>
<rect x="831" y="513" width="3" height="1" fill="#000"/>
<rect x="831" y="516" width="3" height="1" fill="#000"/>
<rect x="831" y="519" width="3" height="1" fill="#000"/>
<rect x="831" y="522" width="8" height="1" fill="#000"/>
<rect x="831" y="525" width="3" height="1" fill="#000"/>
<rect x="831" y="528" width="3" height="1" fill="#000"/>
<rect x="831" y="531" width="3" height="1" fill="#000"/>
<rect x="831" y="534" width="3" height="1" fill="#000"/>
<rect x="831" y="537" width="8" height="1" fill="#000"/>
<rect x="831" y="540" width="3" height="1" fill="#000"/>
<rect x="831" y="543" width="3" height="1" fill="#000"/>
<text x="877" y="183" font-size="12" fill="#000" text-anchor="end" font-weight="normal">4.45</text>
<text x="877" y="198" font-size="12" fill="#000" text-anchor="end" font-weight="normal">4.40</text>
<text x="877" y="213" font-size="12" fill="#000" text-anchor="end" font-weight="normal">4.35</text>
<text x="877" y="228" font-size="12" fill="#000" text-anchor="end" font-weight="normal">4.30</text>
<text x="877" y="243" font-size="12" fill="#000" text-anchor="end" font-weight="normal">4.25</text>
<text x="877" y="258" font-size="12" fill="#000" text-anchor="end" font-weight="normal">4.20</text>
<text x="877" y="273" font-size="12" fill="#000" text-anchor="end" font-weight="normal">4.15</text>
<text x="877" y="288" font-size="12" fill="#000" text-anchor="end" font-weight="normal">4.10</text>
<text x="877" y="303" font-size="12" fill="#000" text-anchor="end" font-weight="normal">4.05</text>
<text x="877" y="318" font-size="12" fill="#000" text-anchor="end" font-weight="normal">4.00</text>
<text x="877" y="333" font-size="12" fill="#000" text-anchor="end" font-weight="normal">3.95</text>
<text x="877" y="348" font-size="12" fill="#000" text-anchor="end" font-weight="normal">3.90</text>
<text x="877" y="363" font-size="12" fill="#000" text-anchor="end" font-weight="normal">3.85</text>
<text x="877" y="378" font-size="12" fill="#000" text-anchor="end" font-weight="normal">3.80</text>
<text x="877" y="393" font-size="12" fill="#000" text-anchor="end" font-weight="normal">3.75</text>
<text x="877" y="408" font-size="12" fill="#000" text-anchor="end" font-weight="normal">3.70</text>
<text x="877" y="423" font-size="12" fill="#000" text-anchor="end" font-weight="normal">3.65</text>
<text x="877" y="438" font-size="12" fill="#000" text-anchor="end" font-weight="normal">3.60</text>
<text x="877" y="453" font-size="12" fill="#000" text-anchor="end" font-weight="normal">3.55</text>
<text x="877" y="468" font-size="12" fill="#000" text-anchor="end" font-weight="normal">3.50</text>
<text x="877" y="483" font-size="12" fill="#000" text-anchor="end" font-weight="normal">3.45</text>
<text x="877" y="498" font-size="12" fill="#000" text-anchor="end" font-weight="normal">3.40</text>
<text x="877" y="513" font-size="12" fill="#000" text-anchor="end" font-weight="normal">3.35</text>
<text x="877" y="528" font-size="12" fill="#000" text-anchor="end" font-weight="normal">3.30</text>
<text x="877" y="543" font-size="12" fill="#000" text-anchor="end" font-weight="normal">3.25</text>
<rect x="781" y="528" width="58" height="18" fill="#ff0000"/>
<rect x="783" y="530" width="54" height="14" fill="#fff"/>
<text x="810.5" y="542" font-size="11" fill="#ff0000" text-anchor="middle" font-weight="normal">3.00/3.05?</text>
<rect x="0" y="548" width="881" height="1" fill="#80c0b0"/>
<rect x="0" y="549" width="881" height="1" fill="#c0e0d0"/>
<rect x="0" y="550" width="881" height="1" fill="#408880"/>
<rect x="0" y="551" width="881" height="1" fill="#000"/>
<rect x="5" y="588" width="1" height="1" fill="#0000ff"/>
<rect x="18" y="585" width="1" height="4" fill="#0000ff"/>
<rect x="24" y="588" width="1" height="1" fill="#0000ff"/>
<rect x="31" y="588" width="1" height="1" fill="#0000ff"/>
<rect x="37" y="587" width="1" height="2" fill="#0000ff"/>
<rect x="44" y="587" width="1" height="2" fill="#0000ff"/>
<rect x="50" y="588" width="1" height="1" fill="#0000ff"/>
<rect x="57" y="587" width="1" height="2" fill="#0000ff"/>
<rect x="63" y="586" width="1" height="3" fill="#0000ff"/>
<rect x="70" y="588" width="1" height="1" fill="#0000ff"/>
<rect x="76" y="588" width="1" height="1" fill="#0000ff"/>
<rect x="83" y="588" width="1" height="1" fill="#0000ff"/>
<rect x="89" y="588" width="1" height="1" fill="#0000ff"/>
<rect x="96" y="583" width="1" height="6" fill="#0000ff"/>
<rect x="102" y="587" width="1" height="2" fill="#0000ff"/>
<rect x="109" y="586" width="1" height="3" fill="#0000ff"/>
<rect x="115" y="585" width="1" height="4" fill="#0000ff"/>
<rect x="129" y="587" width="1" height="2" fill="#0000ff"/>
<rect x="135" y="584" width="1" height="5" fill="#0000ff"/>
<rect x="142" y="577" width="1" height="12" fill="#0000ff"/>
<rect x="148" y="575" width="1" height="14" fill="#0000ff"/>
<rect x="155" y="588" width="1" height="1" fill="#0000ff"/>
<rect x="161" y="587" width="1" height="2" fill="#0000ff"/>
<rect x="168" y="577" width="1" height="12" fill="#0000ff"/>
<rect x="174" y="587" width="1" height="2" fill="#0000ff"/>
<rect x="187" y="587" width="1" height="2" fill="#0000ff"/>
<rect x="194" y="588" width="1" height="1" fill="#0000ff"/>
<rect x="200" y="587" width="1" height="2" fill="#0000ff"/>
<rect x="207" y="578" width="1" height="11" fill="#0000ff"/>
<rect x="213" y="580" width="1" height="9" fill="#0000ff"/>
<rect x="220" y="585" width="1" height="4" fill="#0000ff"/>
<rect x="226" y="587" width="1" height="2" fill="#0000ff"/>
<rect x="233" y="588" width="1" height="1" fill="#0000ff"/>
<rect x="239" y="588" width="1" height="1" fill="#0000ff"/>
<rect x="246" y="587" width="1" height="2" fill="#0000ff"/>
<rect x="252" y="588" width="1" height="1" fill="#0000ff"/>
<rect x="259" y="588" width="1" height="1" fill="#0000ff"/>
<rect x="272" y="587" width="1" height="2" fill="#0000ff"/>
<rect x="279" y="587" width="1" height="2" fill="#0000ff"/>
<rect x="285" y="577" width="1" height="12" fill="#0000ff"/>
<rect x="292" y="587" width="1" height="2" fill="#0000ff"/>
<rect x="298" y="588" width="1" height="1" fill="#0000ff"/>
<rect x="305" y="588" width="1" height="1" fill="#0000ff"/>
<rect x="311" y="584" width="1" height="5" fill="#0000ff"/>
<rect x="318" y="586" width="1" height="3" fill="#0000ff"/>
<rect x="324" y="588" width="1" height="1" fill="#0000ff"/>
<rect x="331" y="586" width="1" height="3" fill="#0000ff"/>
<rect x="337" y="587" width="1" height="2" fill="#0000ff"/>
<rect x="344" y="588" width="1" height="1" fill="#0000ff"/>
<rect x="350" y="586" width="1" height="3" fill="#0000ff"/>
<rect x="357" y="588" width="1" height="1" fill="#0000ff"/>
<rect x="363" y="575" width="1" height="14" fill="#0000ff"/>
<rect x="376" y="577" width="1" height="12" fill="#0000ff"/>
<rect x="383" y="585" width="1" height="4" fill="#0000ff"/>
<rect x="389" y="582" width="1" height="7" fill="#0000ff"/>
<rect x="396" y="587" width="1" height="2" fill="#0000ff"/>
<rect x="402" y="587" width="1" height="2" fill="#0000ff"/>
<rect x="409" y="582" width="1" height="7" fill="#0000ff"/>
<rect x="415" y="588" width="1" height="1" fill="#0000ff"/>
<rect x="422" y="586" width="1" height="3" fill="#0000ff"/>
<rect x="428" y="588" width="1" height="1" fill="#0000ff"/>
<rect x="442" y="585" width="1" height="4" fill="#0000ff"/>
<rect x="448" y="588" width="1" height="1" fill="#0000ff"/>
<rect x="461" y="576" width="1" height="13" fill="#0000ff"/>
<rect x="474" y="586" width="1" height="3" fill="#0000ff"/>
<rect x="481" y="586" width="1" height="3" fill="#0000ff"/>
<rect x="487" y="584" width="1" height="5" fill="#0000ff"/>
<rect x="494" y="586" width="1" height="3" fill="#0000ff"/>
<rect x="500" y="586" width="1" height="3" fill="#0000ff"/>
<rect x="507" y="587" width="1" height="2" fill="#0000ff"/>
<rect x="513" y="588" width="1" height="1" fill="#0000ff"/>
<rect x="526" y="586" width="1" height="3" fill="#0000ff"/>
<rect x="533" y="588" width="1" height="1" fill="#0000ff"/>
<rect x="539" y="588" width="1" height="1" fill="#0000ff"/>
<rect x="546" y="586" width="1" height="3" fill="#0000ff"/>
<rect x="552" y="584" width="1" height="5" fill="#0000ff"/>
<rect x="559" y="585" width="1" height="4" fill="#0000ff"/>
<rect x="565" y="586" width="1" height="3" fill="#0000ff"/>
<rect x="572" y="584" width="1" height="5" fill="#0000ff"/>
<rect x="650" y="588" width="1" height="1" fill="#0000ff"/>
<rect x="670" y="588" width="1" height="1" fill="#0000ff"/>
<rect x="683" y="588" width="1" height="1" fill="#0000ff"/>
<rect x="689" y="588" width="1" height="1" fill="#0000ff"/>
<rect x="709" y="586" width="1" height="3" fill="#0000ff"/>
<rect x="741" y="588" width="1" height="1" fill="#0000ff"/>
<rect x="748" y="585" width="1" height="4" fill="#0000ff"/>
<rect x="755" y="587" width="1" height="2" fill="#0000ff"/>
<rect x="830" y="552" width="1" height="37" fill="#000"/>
<rect x="831" y="557" width="8" height="1" fill="#000"/>
<rect x="831" y="563" width="8" height="1" fill="#000"/>
<rect x="831" y="568" width="8" height="1" fill="#000"/>
<rect x="831" y="573" width="8" height="1" fill="#000"/>
<rect x="831" y="579" width="8" height="1" fill="#000"/>
<rect x="831" y="584" width="8" height="1" fill="#000"/>
<rect x="831" y="554" width="4" height="1" fill="#000"/>
<rect x="831" y="560" width="4" height="1" fill="#000"/>
<rect x="831" y="565" width="4" height="1" fill="#000"/>
<rect x="831" y="570" width="4" height="1" fill="#000"/>
<rect x="831" y="576" width="4" height="1" fill="#000"/>
<rect x="831" y="581" width="4" height="1" fill="#000"/>
<rect x="831" y="586" width="4" height="1" fill="#000"/>
<text x="877" y="569" font-size="12" fill="#000" text-anchor="end" font-weight="normal">40000</text>
<text x="877" y="588.6" font-size="12" fill="#000" text-anchor="end" font-weight="normal">20000</text>
<rect x="832" y="576" width="19" height="13" fill="#000"/>
<rect x="833" y="577" width="17" height="12" fill="#fff"/>
<text x="834" y="586" font-size="9" fill="#000" text-anchor="start" font-weight="normal">x10</text>
<rect x="0" y="589" width="830" height="1" fill="#000"/>
<rect x="0" y="605" width="830" height="1" fill="#000"/>
<rect x="0" y="621" width="881" height="1" fill="#80c0b0"/>
<text x="2" y="602" font-size="12" fill="#000" text-anchor="start" font-weight="normal">1</text>
<rect x="24" y="589" width="1" height="17" fill="#000"/>
<text x="27" y="602" font-size="12" fill="#000" text-anchor="start" font-weight="normal">7</text>
<rect x="57" y="589" width="1" height="17" fill="#000"/>
<text x="60" y="602" font-size="12" fill="#000" text-anchor="start" font-weight="normal">14</text>
<rect x="89" y="589" width="1" height="17" fill="#000"/>
<text x="92" y="602" font-size="12" fill="#000" text-anchor="start" font-weight="normal">21</text>
<rect x="122" y="589" width="1" height="17" fill="#000"/>
<text x="125" y="602" font-size="12" fill="#000" text-anchor="start" font-weight="normal">28</text>
<rect x="155" y="589" width="1" height="17" fill="#000"/>
<text x="158" y="602" font-size="12" fill="#000" text-anchor="start" font-weight="normal">7</text>
<rect x="187" y="589" width="1" height="17" fill="#000"/>
<text x="190" y="602" font-size="12" fill="#000" text-anchor="start" font-weight="normal">14</text>
<rect x="220" y="589" width="1" height="17" fill="#000"/>
<text x="223" y="602" font-size="12" fill="#000" text-anchor="start" font-weight="normal">21</text>
<rect x="246" y="589" width="1" height="17" fill="#000"/>
<text x="249" y="602" font-size="12" fill="#000" text-anchor="start" font-weight="normal">29</text>
<rect x="272" y="589" width="1" height="17" fill="#000"/>
<text x="275" y="602" font-size="12" fill="#000" text-anchor="start" font-weight="normal">4</text>
<rect x="305" y="589" width="1" height="17" fill="#000"/>
<text x="308" y="602" font-size="12" fill="#000" text-anchor="start" font-weight="normal">11</text>
<rect x="337" y="589" width="1" height="17" fill="#000"/>
<text x="340" y="602" font-size="12" fill="#000" text-anchor="start" font-weight="normal">18</text>
<rect x="370" y="589" width="1" height="17" fill="#000"/>
<text x="373" y="602" font-size="12" fill="#000" text-anchor="start" font-weight="normal">25</text>
<rect x="402" y="589" width="1" height="17" fill="#000"/>
<text x="405" y="602" font-size="12" fill="#000" text-anchor="start" font-weight="normal">2</text>
<rect x="435" y="589" width="1" height="17" fill="#000"/>
<text x="438" y="602" font-size="12" fill="#000" text-anchor="start" font-weight="normal">9</text>
<rect x="468" y="589" width="1" height="17" fill="#000"/>
<text x="471" y="602" font-size="12" fill="#000" text-anchor="start" font-weight="normal">16</text>
<rect x="500" y="589" width="1" height="17" fill="#000"/>
<text x="503" y="602" font-size="12" fill="#000" text-anchor="start" font-weight="normal">23</text>
<rect x="533" y="589" width="1" height="17" fill="#000"/>
<text x="536" y="602" font-size="12" fill="#000" text-anchor="start" font-weight="normal">30</text>
<rect x="565" y="589" width="1" height="17" fill="#000"/>
<text x="568" y="602" font-size="12" fill="#000" text-anchor="start" font-weight="normal">6</text>
<rect x="598" y="589" width="1" height="17" fill="#000"/>
<text x="601" y="602" font-size="12" fill="#000" text-anchor="start" font-weight="normal">13</text>
<rect x="631" y="589" width="1" height="17" fill="#000"/>
<text x="634" y="602" font-size="12" fill="#000" text-anchor="start" font-weight="normal">20</text>
<rect x="663" y="589" width="1" height="17" fill="#000"/>
<text x="666" y="602" font-size="12" fill="#000" text-anchor="start" font-weight="normal">27</text>
<rect x="696" y="589" width="1" height="17" fill="#000"/>
<text x="699" y="602" font-size="12" fill="#000" text-anchor="start" font-weight="normal">4</text>
<rect x="722" y="589" width="1" height="17" fill="#000"/>
<text x="725" y="602" font-size="12" fill="#000" text-anchor="start" font-weight="normal">11</text>
<rect x="755" y="589" width="1" height="17" fill="#000"/>
<text x="758" y="602" font-size="12" fill="#000" text-anchor="start" font-weight="normal">18</text>
<rect x="787" y="589" width="1" height="17" fill="#000"/>
<text x="790" y="602" font-size="12" fill="#000" text-anchor="start" font-weight="normal">25</text>
<rect x="820" y="589" width="1" height="17" fill="#000"/>
<text x="823" y="602" font-size="12" fill="#000" text-anchor="start" font-weight="normal">1</text>
<rect x="265" y="589" width="1" height="17" fill="#000"/>
<rect x="689" y="589" width="1" height="17" fill="#000"/>
<text x="1" y="617" font-size="12" fill="#000" text-anchor="start" font-weight="normal">February</text>
<rect x="129" y="605" width="1" height="16" fill="#000"/>
<text x="131.2" y="617" font-size="12" fill="#000" text-anchor="start" font-weight="normal">March</text>
<rect x="265" y="605" width="1" height="16" fill="#000"/>
<text x="267.2" y="617" font-size="12" fill="#000" text-anchor="start" font-weight="normal">April</text>
<rect x="402" y="605" width="1" height="16" fill="#000"/>
<text x="404.2" y="617" font-size="12" fill="#000" text-anchor="start" font-weight="normal">May</text>
<rect x="546" y="605" width="1" height="16" fill="#000"/>
<text x="548.2" y="617" font-size="12" fill="#000" text-anchor="start" font-weight="normal">June</text>
<rect x="689" y="605" width="1" height="16" fill="#000"/>
<text x="691.2" y="617" font-size="12" fill="#000" text-anchor="start" font-weight="normal">July</text>
<rect x="820" y="605" width="1" height="16" fill="#000"/>
<text x="821.5" y="617" font-size="12" fill="#000" text-anchor="start" font-weight="normal">A</text>
<rect x="830" y="589" width="53" height="33" fill="#80c0b0"/>
<rect x="831" y="590" width="52" height="1" fill="#c0e0d0"/>
<rect x="831" y="590" width="1" height="32" fill="#c0e0d0"/>
<path d="M766.6 487.4 C771 497 775 511 775.4 525 C775.6 533 772 542 769.2 548.6" fill="none" stroke="#ff0000" stroke-width="3.4" stroke-linecap="round" shape-rendering="auto"/>
<path d="M766.9 533.6 L769 549 L778.2 539.9" fill="none" stroke="#ff0000" stroke-width="3.2" stroke-linecap="round" stroke-linejoin="miter" shape-rendering="auto"/>
</svg>
</body></html>
